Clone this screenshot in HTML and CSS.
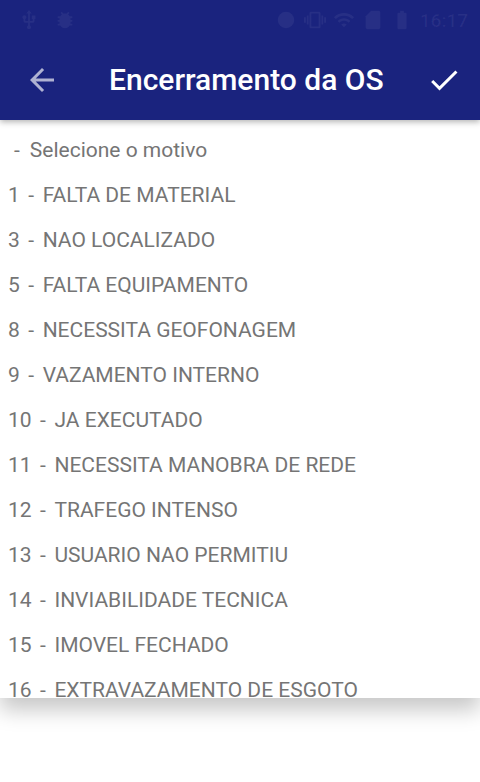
FILE: index.html
```html
<!DOCTYPE html>
<html>
<head>
    <meta charset="UTF-8" />
    <title>Encerramento da OS</title>
    <meta name="viewport" content="width=device-width, initial-scale=1">
    <link rel="stylesheet" href="styles.css">
</head>
<body>

<header class="appbar">
  <div class="statusbar">
    <div class="status-left">
      <svg class="sicon" viewBox="0 0 24 24"><path d="M15 7v4h1v2h-3V5h2l-3-4-3 4h2v8H8v-2.07c.7-.37 1.2-1.08 1.2-1.93 0-1.21-.99-2.2-2.2-2.2S4.8 7.79 4.8 9c0 .85.5 1.56 1.2 1.93V13c0 1.11.89 2 2 2h3v3.05c-.71.37-1.2 1.1-1.2 1.95 0 1.22.99 2.2 2.2 2.2s2.2-.98 2.2-2.2c0-.85-.49-1.58-1.2-1.95V15h3c1.11 0 2-.89 2-2v-2h1V7h-4z"/></svg>
      <svg class="sicon" viewBox="0 0 24 24"><path d="M20 8h-2.81c-.45-.78-1.07-1.45-1.82-1.96L17 4.41 15.59 3l-2.17 2.17C12.96 5.06 12.49 5 12 5s-.96.06-1.41.17L8.41 3 7 4.41l1.62 1.63C7.88 6.55 7.26 7.22 6.81 8H4v2h2.09c-.05.33-.09.66-.09 1v1H4v2h2v1c0 .34.04.67.09 1H4v2h2.81c1.04 1.79 2.97 3 5.19 3s4.15-1.21 5.19-3H20v-2h-2.09c.05-.33.09-.66.09-1v-1h2v-2h-2v-1c0-.34-.04-.67-.09-1H20V8z"/></svg>
    </div>
    <div class="status-right">
      <svg class="sicon" viewBox="0 0 24 24"><circle cx="12" cy="12" r="9"/></svg>
      <svg class="sicon" viewBox="0 0 24 24"><path d="M0 15h2V9H0v6zm3 2h2V7H3v10zm19-8v6h2V9h-2zm-3 8h2V7h-2v10zM16.5 3h-9C6.67 3 6 3.67 6 4.5v15c0 .83.67 1.5 1.5 1.5h9c.83 0 1.5-.67 1.5-1.5v-15c0-.83-.67-1.5-1.5-1.5zM16 19H8V5h8v14z"/></svg>
      <svg class="sicon" viewBox="0 0 24 24"><path d="M1 9l2 2c4.97-4.970 13.03-4.97 18 0l2-2C16.93 2.93 7.08 2.93 1 9zm8 8l3 3 3-3c-1.65-1.66-4.34-1.66-6 0zm-4-4l2 2c2.76-2.76 7.24-2.76 10 0l2-2C15.14 9.14 8.87 9.14 5 13z"/></svg>
      <svg class="sicon" viewBox="0 0 24 24"><path d="M18 2h-8L4 8v12c0 1.1.9 2 2 2h12c1.1 0 2-.9 2-2V4c0-1.1-.9-2-2-2z"/></svg>
      <svg class="sicon" viewBox="0 0 24 24"><path d="M15.67 4H14V2h-4v2H8.33C7.6 4 7 4.6 7 5.33v15.33C7 21.4 7.6 22 8.33 22h7.33c.74 0 1.34-.6 1.34-1.33V5.33C17 4.6 16.4 4 15.67 4z"/></svg>
      <span class="clock">16:17</span>
    </div>
  </div>

  <div class="toolbar">
    <svg class="nav-icon back" viewBox="0 0 24 24"><path d="M20 11H7.83l5.59-5.59L12 4l-8 8 8 8 1.41-1.41L7.83 13H20v-2z"/></svg>
    <h1 class="title">Encerramento da OS</h1>
    <svg class="nav-icon done" viewBox="0 0 24 24"><path d="M9 16.17L4.83 12l-1.42 1.41L9 19 21 7l-1.41-1.41z"/></svg>
  </div>
</header>

<section class="dropdown">
  <ul class="options">
    <li class="prompt"><span class="sep">-</span>Selecione o motivo</li>
    <li>1<span class="sep">-</span>FALTA DE MATERIAL</li>
    <li>3<span class="sep">-</span>NAO LOCALIZADO</li>
    <li>5<span class="sep">-</span>FALTA EQUIPAMENTO</li>
    <li>8<span class="sep">-</span>NECESSITA GEOFONAGEM</li>
    <li>9<span class="sep">-</span>VAZAMENTO INTERNO</li>
    <li>10<span class="sep">-</span>JA EXECUTADO</li>
    <li>11<span class="sep">-</span>NECESSITA MANOBRA DE REDE</li>
    <li>12<span class="sep">-</span>TRAFEGO INTENSO</li>
    <li>13<span class="sep">-</span>USUARIO NAO PERMITIU</li>
    <li>14<span class="sep">-</span>INVIABILIDADE TECNICA</li>
    <li>15<span class="sep">-</span>IMOVEL FECHADO</li>
    <li>16<span class="sep">-</span>EXTRAVAZAMENTO DE ESGOTO</li>
  </ul>
</section>

</body>
</html>
```

FILE: styles.css
```css
* {
  box-sizing: border-box;
}

body {
  margin: 0;
  background: #fff;
  font-family: Roboto, "Noto Sans", sans-serif;
  height: 782px;
  overflow: hidden;
}

/* Blue app bar with status bar on top */
.appbar {
  background-color: #1a237e;
  height: 120px;
  position: relative;
  z-index: 2;
  box-shadow: 0 2px 6px rgba(0, 0, 0, 0.3);
}

.statusbar {
  height: 40px;
  display: flex;
  justify-content: space-between;
  align-items: center;
  padding: 0 12px 0 18px;
}

.status-left,
.status-right {
  display: flex;
  align-items: center;
  gap: 14px;
}

.status-right {
  gap: 7px;
}

.sicon {
  width: 22px;
  height: 22px;
  fill: rgba(255, 255, 255, 0.06);
}

.clock {
  color: rgba(255, 255, 255, 0.06);
  font-size: 19px;
  font-weight: 500;
}

.toolbar {
  height: 80px;
  display: flex;
  align-items: center;
  padding: 0 18px 0 24px;
}

.nav-icon {
  width: 36px;
  height: 36px;
  fill: #fff;
  flex: none;
}

.back {
  opacity: 0.65;
}

.title {
  flex: 1;
  margin: 0 0 2px 49px;
  color: #fff;
  font-size: 30px;
  font-weight: 500;
}

/* Open spinner list */
.dropdown {
  height: 578px;
  overflow: hidden;
  background: #fff;
  padding-top: 8px;
  box-shadow: 0 12px 20px rgba(0, 0, 0, 0.22);
  position: relative;
  z-index: 1;
}

.options {
  list-style-type: none;
  margin: 0;
  padding: 0;
}

.options li {
  height: 45px;
  line-height: 45px;
  padding-left: 8px;
  color: #757575;
  font-size: 21px;
  white-space: nowrap;
}

.sep {
  margin: 0 8.5px;
}

.prompt .sep {
  margin-left: 6px;
  margin-right: 10px;
}
```
